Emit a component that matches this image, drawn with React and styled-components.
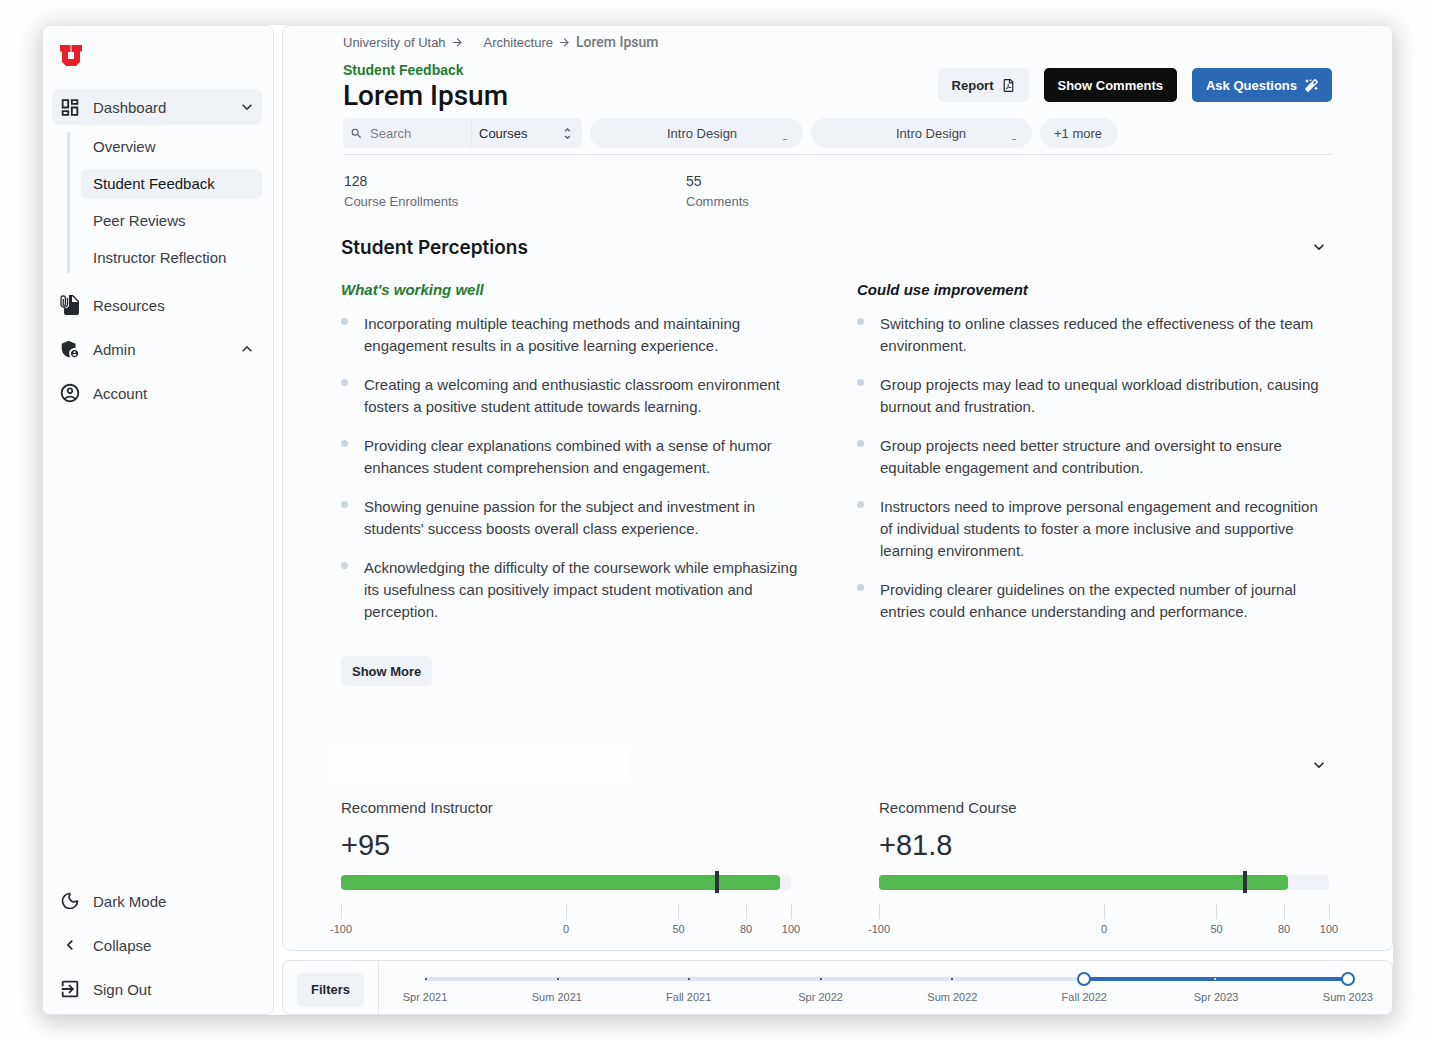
import React, { useState } from "react"
import styled, { createGlobalStyle, css } from "styled-components"
import {
  MdOutlineDashboard,
  MdAdminPanelSettings,
  MdOutlineAccountCircle,
  MdExitToApp,
  MdKeyboardArrowDown,
  MdKeyboardArrowUp,
  MdKeyboardArrowLeft,
  MdArrowForward,
  MdUnfoldMore,
  MdSearch,
} from "react-icons/md"
import { Moon } from "lucide-react"
import { FaMagic, FaRegFilePdf } from "react-icons/fa"

const GlobalStyle = createGlobalStyle`
  * {
    box-sizing: border-box;
  }
  body {
    margin: 0;
    background: #fefefe;
    color: #3a3d42;
    font-family: "Liberation Sans", Arial, sans-serif;
    font-size: 15px;
  }
  h1, h2, h3, p, ul, ol, dl, dd {
    margin: 0;
    padding: 0;
  }
  ul, ol {
    list-style: none;
  }
  button, input, select {
    font-family: inherit;
    border: 0;
    margin: 0;
  }
  a {
    color: inherit;
    text-decoration: none;
  }
`

const Page = styled.div`
  display: flex;
  min-height: 100vh;
  padding: 25px 38px 24px 42px;
`

const Shell = styled.div`
  flex: 1;
  min-width: 0;
  display: flex;
  gap: 8px;
  background: #fff;
  border-radius: 8px;
  box-shadow: 0 6px 22px rgba(50, 35, 40, 0.2), 0 0 24px 8px rgba(50, 35, 40, 0.06);
`

const panel = css`
  background: #fbfcfe;
  border: 1px solid #e2e4e7;
  border-radius: 8px;
`

const Sidebar = styled.nav`
  ${panel}
  flex: 0 0 232px;
  display: flex;
  flex-direction: column;
  padding: 19px 11px 7px 9px;
`

const Logo = styled.a`
  display: block;
  height: 21px;
  margin: 0 0 23px 8px;
`

const NavItem = styled.a`
  display: flex;
  align-items: center;
  gap: 12px;
  height: 36px;
  padding: 0 5px 0 7px;
  border-radius: 6px;
  background: ${({ $active }) => ($active ? "#eff2f7" : "transparent")};
  span {
    flex: 1;
  }
`

const NavIcon = styled.i`
  display: flex;
  justify-content: center;
  width: 22px;
  color: #24282d;
`

const NavGroup = styled.div`
  display: flex;
  flex-direction: column;
  gap: 8px;
`

const SubNav = styled.div`
  display: flex;
  flex-direction: column;
  gap: 7px;
  margin: 7px 0 14px 15px;
  padding-left: 11px;
  border-left: 3px solid #dce5ef;
`

const SubItem = styled.a`
  height: 30px;
  line-height: 30px;
  padding-left: 12px;
  border-radius: 6px;
  color: ${({ $active }) => ($active ? "#15181b" : "inherit")};
  background: ${({ $active }) => ($active ? "#eff2f7" : "transparent")};
`

const Spacer = styled.div`
  flex: 1;
`

const Column = styled.div`
  flex: 1;
  min-width: 0;
  display: flex;
  flex-direction: column;
  gap: 9px;
`

const Main = styled.main`
  ${panel}
  flex: 1;
`

const Header = styled.header`
  margin: 0 60px;
  padding-top: 8px;
  padding-bottom: 6px;
  border-bottom: 1px solid #e2e4e7;
`

const Crumbs = styled.nav`
  display: flex;
  align-items: center;
  gap: 5px;
  height: 16px;
  font-size: 13px;
  color: #5f646c;
  a:nth-of-type(2) {
    margin-left: 15px;
  }
`

const CurrentCrumb = styled.span`
  font-family: Roboto, sans-serif;
  font-size: 14px;
  font-weight: 500;
  color: #74777c;
`

const TitleRow = styled.div`
  display: flex;
  justify-content: space-between;
  align-items: flex-start;
  margin: 11px 0 5px;
  height: 52px;
`

const Kicker = styled.p`
  font-size: 14px;
  line-height: 18px;
  font-weight: 700;
  color: #267a33;
`

const Title = styled.h1`
  font-family: Roboto, sans-serif;
  font-size: 28px;
  line-height: 34px;
  font-weight: 500;
  color: #111315;
`

const Actions = styled.div`
  display: flex;
  gap: 15px;
  padding-top: 7px;
`

const tones = {
  plain: "background: #eff2f7; color: #24282d;",
  dark: "background: #0d0e0e; color: #fff;",
  blue: "background: #2c69b5; color: #fff;",
}

const Button = styled.button`
  display: flex;
  align-items: center;
  justify-content: center;
  gap: 8px;
  height: ${({ $small }) => ($small ? 30 : 34)}px;
  padding: 0 ${({ $small }) => ($small ? 11 : 14)}px;
  border-radius: 5px;
  font-size: 13px;
  font-weight: 700;
  ${({ $tone }) => tones[$tone || "plain"]}
`

const Filters = styled.div`
  display: flex;
  gap: 8px;
`

const SearchGroup = styled.div`
  display: flex;
  align-items: center;
  width: 239px;
  height: 30px;
  padding: 0 7px;
  border-radius: 5px;
  background: #eff2f7;
  font-size: 13px;
  color: #54585f;
  input {
    width: 109px;
    height: 30px;
    padding: 0 0 0 7px;
    background: none;
    font-size: 13px;
    border-right: 1px solid #e6eaf0;
  }
  input::placeholder {
    color: #7c8087;
    opacity: 1;
  }
  select {
    flex: 1;
    height: 30px;
    padding: 0 0 0 7px;
    appearance: none;
    background: none;
    color: #24282d;
    font-size: 13px;
  }
`

const Pill = styled.button`
  display: flex;
  align-items: center;
  justify-content: space-between;
  width: ${({ $width }) => ($width ? $width + "px" : "auto")};
  height: 30px;
  padding: 0 16px 0 ${({ $width }) => ($width ? $width - 136 : 14)}px;
  border-radius: 15px;
  background: #eff2f7;
  color: #44484e;
  font-size: 13px;
  &::after {
    content: "";
    display: ${({ $width }) => ($width ? "block" : "none")};
    width: 4px;
    height: 1px;
    margin-top: 12px;
    background: #8b8f95;
  }
`

const Stats = styled.dl`
  display: grid;
  grid-template-columns: 342px 1fr;
  padding: 16px 61px 0;
  dt {
    font-size: 13px;
    line-height: 20px;
    color: #666b73;
  }
  dd {
    font-size: 14px;
    line-height: 21px;
  }
  div {
    display: flex;
    flex-direction: column-reverse;
  }
`

const Section = styled.section`
  padding: 0 63px 0 58px;
`

const SectionHead = styled.div`
  display: flex;
  align-items: center;
  justify-content: space-between;
  height: 30px;
  margin-top: ${({ $top }) => $top}px;
`

const SectionTitle = styled.h2`
  font-family: Inter, sans-serif;
  font-size: 19px;
  font-weight: 600;
  color: #15181b;
`

const BlankTitle = styled.div`
  width: 300px;
  height: 30px;
  margin-left: -13px;
  background: #fefefe;
`

const Toggle = styled.button`
  display: flex;
  padding: 0;
  background: none;
  color: #24282d;
`

const TwoCols = styled.div`
  display: grid;
  grid-template-columns: 1fr 1fr;
  column-gap: ${({ $gap }) => $gap}px;
`

const ListTitle = styled.h3`
  margin: 17px 0 12px;
  font-size: 15px;
  line-height: 22px;
  font-style: italic;
  color: ${({ $good }) => ($good ? "#267a33" : "#15181b")};
`

const Bullets = styled.ul`
  display: flex;
  flex-direction: column;
  gap: 17px;
`

const Bullet = styled.li`
  display: flex;
  gap: 16px;
  padding-right: 10px;
  line-height: 22px;
  &::before {
    content: "";
    flex: none;
    width: 7px;
    height: 7px;
    margin-top: 5px;
    border-radius: 50%;
    background: #cbd5e1;
  }
`

const MoreRow = styled.div`
  margin-top: 33px;
`

const GaugeLabel = styled.h3`
  margin-top: 17px;
  font-size: 15px;
  line-height: 22px;
  font-weight: 400;
`

const GaugeValue = styled.p`
  margin: 9px 0 13px;
  font-size: 29px;
  line-height: 34px;
  color: #2b2f34;
`

const GaugeBar = styled.div`
  position: relative;
  height: 15px;
  border-radius: 4px;
  background: #eff2f7;
`

const GaugeFill = styled.div`
  height: 15px;
  border-radius: 4px;
  background: #53b84f;
`

const Marker = styled.div`
  position: absolute;
  top: -4px;
  width: 4px;
  height: 22px;
  margin-left: -2px;
  background: #2b3336;
`

const Scale = styled.div`
  position: relative;
  height: 46px;
  margin-top: 14px;
`

const ScaleTick = styled.span`
  position: absolute;
  display: flex;
  flex-direction: column;
  align-items: center;
  width: 0;
  font-size: 11px;
  line-height: 20px;
  color: #5f646c;
  &::before {
    content: "";
    width: 1px;
    height: 15px;
    background: #d9dce0;
  }
`

const Footer = styled.footer`
  ${panel}
  display: flex;
  height: 55px;
`

const FilterCell = styled.div`
  display: flex;
  align-items: center;
  padding: 4px 14px 0;
  border-right: 1px solid #e2e4e7;
`

const Timeline = styled.div`
  flex: 1;
  padding: 9px 44px 0 46px;
`

const Track = styled.div`
  position: relative;
  height: 18px;
`

const Rail = styled.div`
  position: absolute;
  top: 7px;
  left: ${({ $from }) => $from}%;
  right: 0;
  height: 4px;
  background: ${({ $on }) => ($on ? "#2c69b5" : "#dce5ef")};
`

const Notches = styled.div`
  position: absolute;
  top: 8px;
  left: 0;
  right: 0;
  display: flex;
  justify-content: space-between;
  i {
    width: 2px;
    height: 2px;
    background: #4c5d73;
  }
  i:nth-child(n + 7) {
    background: #c5daf3;
  }
`

const thumb = css`
  appearance: none;
  width: 14px;
  height: 14px;
  border: 2px solid #2c69b5;
  border-radius: 50%;
  background: #fff;
  pointer-events: auto;
`

const Range = styled.input`
  position: absolute;
  top: 2px;
  left: -7px;
  width: calc(100% + 14px);
  height: 14px;
  appearance: none;
  background: none;
  pointer-events: none;
  &::-webkit-slider-thumb {
    ${thumb}
  }
`

const TermLabels = styled.div`
  display: flex;
  justify-content: space-between;
  span {
    display: flex;
    justify-content: center;
    width: 0;
    white-space: nowrap;
    font-size: 11px;
    line-height: 18px;
    color: #666b73;
  }
`

const LogoMark = () => (
  <svg width="22" height="21" viewBox="0 0 22 21" aria-label="University of Utah">
    <path
      fill="#e8202c"
      d="M0 0h10.500v7H8v7h6V7h-2.500V0H22v6.500h-2V17l-4 4H6l-4-4V6.500H0z"
    />
  </svg>
)

const ResourcesIcon = () => (
  <svg width="20" height="22" viewBox="0 0 20 22">
    <path
      fill="currentColor"
      d="M9 1h4l6 6v12a2 2 0 0 1-2 2H6a2 2 0 0 1-2-2v-5c3 1 5-1 5-3zM12 2v6h6z"
      fillRule="evenodd"
    />
    <path
      fill="none"
      stroke="currentColor"
      strokeWidth="1.3"
      d="M7.500 4v6.500a3.300 3.300 0 0 1-6.500 0V4a2.200 2.200 0 0 1 4.400 0v6.500a1 1 0 0 1-2.200 0V5"
    />
  </svg>
)

const working = [
  "Incorporating multiple teaching methods and maintaining engagement results in a positive learning experience.",
  "Creating a welcoming and enthusiastic classroom environment fosters a positive student attitude towards learning.",
  "Providing clear explanations combined with a sense of humor enhances student comprehension and engagement.",
  "Showing genuine passion for the subject and investment in students' success boosts overall class experience.",
  "Acknowledging the difficulty of the coursework while emphasizing its usefulness can positively impact student motivation and perception.",
]

const improve = [
  "Switching to online classes reduced the effectiveness of the team environment.",
  "Group projects may lead to unequal workload distribution, causing burnout and frustration.",
  "Group projects need better structure and oversight to ensure equitable engagement and contribution.",
  "Instructors need to improve personal engagement and recognition of individual students to foster a more inclusive and supportive learning environment.",
  "Providing clearer guidelines on the expected number of journal entries could enhance understanding and performance.",
]

const terms = [
  "Spr 2021",
  "Sum 2021",
  "Fall 2021",
  "Spr 2022",
  "Sum 2022",
  "Fall 2022",
  "Spr 2023",
  "Sum 2023",
]

// scores go from -100 to 100
const toPercent = score => (score + 100) / 2 + "%"

const Item = ({ icon, label, active, caret }) => (
  <NavItem href="#" $active={active}>
    <NavIcon>{icon}</NavIcon>
    <span>{label}</span>
    {caret}
  </NavItem>
)

const List = ({ title, items, good }) => (
  <div>
    <ListTitle $good={good}>{title}</ListTitle>
    <Bullets>
      {items.map(text => (
        <Bullet key={text}>{text}</Bullet>
      ))}
    </Bullets>
  </div>
)

const Gauge = ({ label, score, average }) => (
  <div>
    <GaugeLabel>{label}</GaugeLabel>
    <GaugeValue>+{score}</GaugeValue>
    <GaugeBar>
      <GaugeFill style={{ width: toPercent(score) }} />
      <Marker style={{ left: toPercent(average) }} />
    </GaugeBar>
    <Scale>
      {[-100, 0, 50, 80, 100].map(n => (
        <ScaleTick key={n} style={{ left: toPercent(n) }}>
          {n}
        </ScaleTick>
      ))}
    </Scale>
  </div>
)

const TermSlider = () => {
  const [from, setFrom] = useState(5)
  const [to, setTo] = useState(7)
  return (
    <Timeline>
      <Track>
        <Rail $from={0} />
        <Rail $on $from={(from / 7) * 100} />
        <Notches>
          {terms.map(t => (
            <i key={t} />
          ))}
        </Notches>
        <Range
          type="range"
          aria-label="First term"
          min="0"
          max="7"
          value={from}
          onChange={e => setFrom(Math.min(+e.target.value, to))}
        />
        <Range
          type="range"
          aria-label="Last term"
          min="0"
          max="7"
          value={to}
          onChange={e => setTo(Math.max(+e.target.value, from))}
        />
      </Track>
      <TermLabels>
        {terms.map(t => (
          <span key={t}>{t}</span>
        ))}
      </TermLabels>
    </Timeline>
  )
}

const App = () => (
  <>
    <GlobalStyle />
    <Page>
      <Shell>
        <Sidebar>
          <Logo href="#">
            <LogoMark />
          </Logo>
          <Item
            active
            icon={<MdOutlineDashboard size={23} />}
            label="Dashboard"
            caret={<MdKeyboardArrowDown size={20} />}
          />
          <SubNav>
            <SubItem href="#">Overview</SubItem>
            <SubItem href="#" $active>
              Student Feedback
            </SubItem>
            <SubItem href="#">Peer Reviews</SubItem>
            <SubItem href="#">Instructor Reflection</SubItem>
          </SubNav>
          <NavGroup>
            <Item icon={<ResourcesIcon />} label="Resources" />
            <Item
              icon={<MdAdminPanelSettings size={22} />}
              label="Admin"
              caret={<MdKeyboardArrowUp size={20} />}
            />
            <Item icon={<MdOutlineAccountCircle size={22} />} label="Account" />
          </NavGroup>
          <Spacer />
          <NavGroup>
            <Item icon={<Moon size={20} strokeWidth={2} />} label="Dark Mode" />
            <Item icon={<MdKeyboardArrowLeft size={20} />} label="Collapse" />
            <Item icon={<MdExitToApp size={22} />} label="Sign Out" />
          </NavGroup>
        </Sidebar>
        <Column>
          <Main>
            <Header>
              <Crumbs>
                <a href="#">University of Utah</a>
                <MdArrowForward size={13} />
                <a href="#">Architecture</a>
                <MdArrowForward size={13} />
                <CurrentCrumb>Lorem Ipsum</CurrentCrumb>
              </Crumbs>
              <TitleRow>
                <div>
                  <Kicker>Student Feedback</Kicker>
                  <Title>Lorem Ipsum</Title>
                </div>
                <Actions>
                  <Button>
                    Report <FaRegFilePdf size={13} />
                  </Button>
                  <Button $tone="dark">Show Comments</Button>
                  <Button $tone="blue">
                    Ask Questions <FaMagic size={13} />
                  </Button>
                </Actions>
              </TitleRow>
              <Filters>
                <SearchGroup>
                  <MdSearch size={13} />
                  <input type="search" placeholder="Search" aria-label="Search" />
                  <select aria-label="Search in">
                    <option>Courses</option>
                  </select>
                  <MdUnfoldMore size={15} />
                </SearchGroup>
                <Pill $width={213}>Intro Design</Pill>
                <Pill $width={221}>Intro Design</Pill>
                <Pill>+1 more</Pill>
              </Filters>
            </Header>
            <Stats>
              <div>
                <dt>Course Enrollments</dt>
                <dd>128</dd>
              </div>
              <div>
                <dt>Comments</dt>
                <dd>55</dd>
              </div>
            </Stats>
            <Section>
              <SectionHead $top={20}>
                <SectionTitle>Student Perceptions</SectionTitle>
                <Toggle aria-label="Toggle student perceptions">
                  <MdKeyboardArrowDown size={20} />
                </Toggle>
              </SectionHead>
              <TwoCols $gap={44}>
                <List good title="What's working well" items={working} />
                <List title="Could use improvement" items={improve} />
              </TwoCols>
              <MoreRow>
                <Button $small>Show More</Button>
              </MoreRow>
            </Section>
            <Section>
              <SectionHead $top={64}>
                <BlankTitle />
                <Toggle aria-label="Toggle recommendations">
                  <MdKeyboardArrowDown size={20} />
                </Toggle>
              </SectionHead>
              <TwoCols $gap={88}>
                <Gauge label="Recommend Instructor" score={95} average={67} />
                <Gauge label="Recommend Course" score={81.8} average={62.5} />
              </TwoCols>
            </Section>
          </Main>
          <Footer>
            <FilterCell>
              <Button>Filters</Button>
            </FilterCell>
            <TermSlider />
          </Footer>
        </Column>
      </Shell>
    </Page>
  </>
)

export default App
